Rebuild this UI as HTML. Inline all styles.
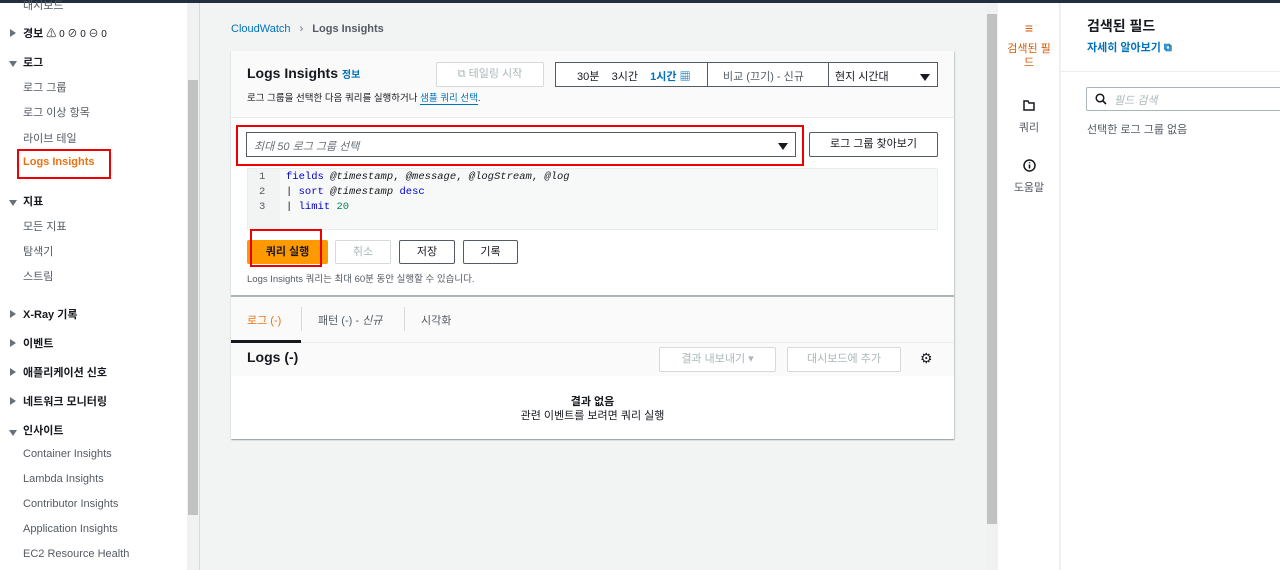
<!DOCTYPE html>
<html><head><meta charset="utf-8"><style>
*{box-sizing:border-box;margin:0;padding:0}
body{width:1280px;height:570px;overflow:hidden;background:#f2f3f3;font-family:"Liberation Sans","Noto Sans CJK KR",sans-serif;font-size:11px;color:#16191f;position:relative}
.a{position:absolute;white-space:nowrap}
.tri{display:inline-block;width:0;height:0}
.tr{border-top:4px solid transparent;border-bottom:4px solid transparent;border-left:6px solid #687078}
.td{border-left:4px solid transparent;border-right:4px solid transparent;border-top:6px solid #687078}
.btn{position:absolute;border:1px solid #545b64;border-radius:2px;background:#fff;text-align:center;font-weight:bold;font-size:11px}
.dis{border-color:#d5dbdb;color:#aab7b8;font-weight:normal}
.mono{font-family:"Liberation Mono",monospace;font-size:10.5px}
</style></head><body>
<div class="a" style="left:0;top:0;width:1280px;height:3px;background:#232f3e"></div>
<!-- sidebar -->
<div class="a" style="left:0;top:3px;width:187px;height:567px;background:#fff"></div>
<div class="a" style="left:187px;top:3px;width:12px;height:567px;background:#f1f1f1"></div>
<div class="a" style="left:188px;top:80px;width:10px;height:435px;background:#c1c1c1"></div>
<div class="a" style="left:199px;top:3px;width:1px;height:567px;background:#d5dbdb"></div>
<div class="a" style="left:23px;top:-3px;color:#545b64">대시보드</div>
<div class="a" style="left:10px;top:28px"><span class="tri tr"></span></div>
<div class="a" style="left:23px;top:25px;font-weight:bold">경보 <span style="font-weight:normal;font-size:10px">⚠ 0 ⊘ 0 ⊖ 0</span></div>
<div class="a" style="left:9px;top:58px"><span class="tri td"></span></div>
<div class="a" style="left:23px;top:54px;font-weight:bold">로그</div>
<div class="a" style="left:23px;top:79px;color:#545b64">로그 그룹</div>
<div class="a" style="left:23px;top:104px;color:#545b64">로그 이상 항목</div>
<div class="a" style="left:23px;top:130px;color:#545b64">라이브 테일</div>
<div class="a" style="left:17px;top:149px;width:94px;height:30px;border:2px solid #e00"></div>
<div class="a" style="left:23px;top:156px;color:#ec7211;font-weight:bold">Logs Insights</div>
<div class="a" style="left:9px;top:197px"><span class="tri td"></span></div>
<div class="a" style="left:23px;top:193px;font-weight:bold">지표</div>
<div class="a" style="left:23px;top:218px;color:#545b64">모든 지표</div>
<div class="a" style="left:23px;top:243px;color:#545b64">탐색기</div>
<div class="a" style="left:23px;top:268px;color:#545b64">스트림</div>
<div class="a" style="left:10px;top:309px"><span class="tri tr"></span></div>
<div class="a" style="left:23px;top:306px;font-weight:bold">X-Ray 기록</div>
<div class="a" style="left:10px;top:338px"><span class="tri tr"></span></div>
<div class="a" style="left:23px;top:335px;font-weight:bold">이벤트</div>
<div class="a" style="left:10px;top:367px"><span class="tri tr"></span></div>
<div class="a" style="left:23px;top:364px;font-weight:bold">애플리케이션 신호</div>
<div class="a" style="left:10px;top:396px"><span class="tri tr"></span></div>
<div class="a" style="left:23px;top:393px;font-weight:bold">네트워크 모니터링</div>
<div class="a" style="left:9px;top:427px"><span class="tri td"></span></div>
<div class="a" style="left:23px;top:422px;font-weight:bold">인사이트</div>
<div class="a" style="left:23px;top:448px;color:#545b64">Container Insights</div>
<div class="a" style="left:23px;top:473px;color:#545b64">Lambda Insights</div>
<div class="a" style="left:23px;top:498px;color:#545b64">Contributor Insights</div>
<div class="a" style="left:23px;top:523px;color:#545b64">Application Insights</div>
<div class="a" style="left:23px;top:548px;color:#545b64">EC2 Resource Health</div>
<!-- breadcrumb -->
<div class="a" style="left:231px;top:23px;color:#0073bb">CloudWatch <span style="color:#687078;margin:0 6px">›</span> <span style="color:#545b64;font-weight:bold">Logs Insights</span></div>
<!-- panel -->
<div class="a" style="left:231px;top:51px;width:723px;height:388px;background:#fff;box-shadow:0 1px 1px rgba(0,28,36,.3),1px 1px 1px rgba(0,28,36,.15)"></div>
<div class="a" style="left:231px;top:51px;width:723px;height:67px;background:#fafafa;border-bottom:1px solid #eaeded"></div>
<div class="a" style="left:247px;top:65px;font-size:14px;font-weight:bold">Logs Insights <span style="font-size:10px;color:#0073bb">정보</span></div>
<div class="a" style="left:247px;top:90px;font-size:9.5px">로그 그룹을 선택한 다음 쿼리를 실행하거나 <span style="color:#0073bb;border-bottom:1px solid #0073bb">샘플 쿼리 선택</span>.</div>
<div class="btn dis" style="left:436px;top:62px;width:108px;height:25px;line-height:23px">⧉ 테일링 시작</div>
<div class="a" style="left:555px;top:62px;width:383px;height:25px;border:1px solid #545b64;background:#fff"></div>
<div class="a" style="left:707px;top:62px;width:1px;height:25px;background:#545b64"></div>
<div class="a" style="left:828px;top:62px;width:1px;height:25px;background:#545b64"></div>
<div class="a" style="left:577px;top:68px;font-size:11px">30분 &nbsp;&nbsp;&nbsp;3시간 &nbsp;&nbsp;&nbsp;<span style="color:#0073bb;font-weight:bold">1시간 ▦</span></div>
<div class="a" style="left:723px;top:68px;color:#545b64">비교 (끄기) - 신규</div>
<div class="a" style="left:835px;top:68px">현지 시간대</div>
<div class="a" style="left:920px;top:72px"><span class="tri td" style="border-top-color:#16191f;border-left-width:5px;border-right-width:5px;border-top-width:7px"></span></div>
<!-- log group select -->
<div class="a" style="left:236px;top:125px;width:568px;height:41px;border:2px solid #e00"></div>
<div class="a" style="left:246px;top:132px;width:550px;height:25px;border:1px solid #545b64;background:#fff"></div>
<div class="a" style="left:254px;top:138px;color:#687078;font-style:italic">최대 50 로그 그룹 선택</div>
<div class="a" style="left:778px;top:141px"><span class="tri td" style="border-top-color:#16191f;border-left-width:5px;border-right-width:5px;border-top-width:7px"></span></div>
<div class="btn" style="left:809px;top:132px;width:129px;height:25px;line-height:23px;font-weight:normal">로그 그룹 찾아보기</div>
<!-- editor -->
<div class="a" style="left:247px;top:168px;width:691px;height:62px;background:#f7f8f8;border:1px solid #eaeded"></div>
<div class="a" style="left:248px;top:169px;width:32px;height:60px;background:#f2f3f3"></div>
<div class="a mono" style="left:259px;top:170px;line-height:15px;color:#545b64">1<br>2<br>3</div>
<div class="a mono" style="left:286px;top:170px;line-height:15px;color:#16191f"><span style="color:#0000cc">fields</span> <i>@timestamp</i>, <i>@message</i>, <i>@logStream</i>, <i>@log</i><br>| <span style="color:#0000cc">sort</span> <i>@timestamp</i> <span style="color:#0000cc">desc</span><br>| <span style="color:#0000cc">limit</span> <span style="color:#098658">20</span></div>
<!-- buttons -->
<div class="btn" style="left:247px;top:240px;width:81px;height:24px;line-height:22px;background:#ff9900;border-color:#ff9900">쿼리 실행</div>
<div class="a" style="left:250px;top:229px;width:72px;height:38px;border:2px solid #e00"></div>
<div class="btn dis" style="left:335px;top:240px;width:56px;height:24px;line-height:22px">취소</div>
<div class="btn" style="left:399px;top:240px;width:56px;height:24px;line-height:22px;font-weight:normal">저장</div>
<div class="btn" style="left:463px;top:240px;width:55px;height:24px;line-height:22px;font-weight:normal">기록</div>
<div class="a" style="left:247px;top:271px;font-size:9.5px;color:#545b64">Logs Insights 쿼리는 최대 60분 동안 실행할 수 있습니다.</div>
<!-- tabs -->
<div class="a" style="left:231px;top:295px;width:723px;height:2px;background:#aab7b8"></div>
<div class="a" style="left:231px;top:297px;width:723px;height:79px;background:#fafafa"></div>
<div class="a" style="left:231px;top:342px;width:723px;height:1px;background:#eaeded"></div>
<div class="a" style="left:247px;top:312px;color:#ec7211">로그 (-)</div>
<div class="a" style="left:231px;top:340px;width:70px;height:3px;background:#16191f"></div>
<div class="a" style="left:301px;top:307px;width:1px;height:24px;background:#d5dbdb"></div>
<div class="a" style="left:318px;top:312px;color:#545b64">패턴 (-) - <i>신규</i></div>
<div class="a" style="left:404px;top:307px;width:1px;height:24px;background:#d5dbdb"></div>
<div class="a" style="left:421px;top:312px;color:#545b64">시각화</div>
<div class="a" style="left:247px;top:349px;font-size:14px;font-weight:bold">Logs (-)</div>
<div class="btn dis" style="left:659px;top:347px;width:117px;height:25px;line-height:23px">결과 내보내기 ▾</div>
<div class="btn dis" style="left:787px;top:347px;width:114px;height:25px;line-height:23px">대시보드에 추가</div>
<div class="a" style="left:920px;top:350px;font-size:14px">⚙</div>
<div class="a" style="left:231px;top:393px;width:723px;text-align:center;font-weight:bold">결과 없음</div>
<div class="a" style="left:231px;top:407px;width:723px;text-align:center">관련 이벤트를 보려면 쿼리 실행</div>
<!-- main scrollbar -->
<div class="a" style="left:986px;top:3px;width:12px;height:567px;background:#f1f1f1"></div>
<div class="a" style="left:987px;top:14px;width:10px;height:510px;background:#c1c1c1"></div>
<!-- right rail -->
<div class="a" style="left:998px;top:3px;width:62px;height:567px;background:#fff;border-right:1px solid #eaeded"></div>
<div class="a" style="left:998px;top:20px;width:62px;text-align:center;color:#d45b07;font-size:14px">≡</div>
<div class="a" style="left:998px;top:42px;width:62px;text-align:center;color:#d45b07;white-space:normal;line-height:14px">검색된 필<br>드</div>
<svg class="a" style="left:1023px;top:100px" width="12" height="11" viewBox="0 0 12 11"><path d="M1 1h4l1 2h5v7H1z" fill="none" stroke="#16191f" stroke-width="1.5"/></svg>
<div class="a" style="left:998px;top:119px;width:62px;text-align:center;color:#545b64">쿼리</div>
<svg class="a" style="left:1023px;top:159px" width="13" height="13" viewBox="0 0 13 13"><circle cx="6.5" cy="6.5" r="5.5" fill="none" stroke="#16191f" stroke-width="1.5"/><path d="M6.5 5.5v4M6.5 3.2v1" stroke="#16191f" stroke-width="1.6"/></svg>
<div class="a" style="left:998px;top:179px;width:62px;text-align:center;color:#545b64">도움말</div>
<div class="a" style="left:1061px;top:3px;width:219px;height:567px;background:#fff"></div>
<div class="a" style="left:1061px;top:71px;width:219px;height:1px;background:#eaeded"></div>
<div class="a" style="left:1087px;top:16px;font-size:14px;font-weight:bold">검색된 필드</div>
<div class="a" style="left:1087px;top:39px;color:#0073bb;font-weight:bold">자세히 알아보기 ⧉</div>
<div class="a" style="left:1086px;top:87px;width:200px;height:24px;border:1px solid #aab7b8;border-radius:2px"></div>
<svg class="a" style="left:1095px;top:93px" width="12" height="12" viewBox="0 0 12 12"><circle cx="5" cy="5" r="3.8" fill="none" stroke="#16191f" stroke-width="1.5"/><path d="M8 8l3 3" stroke="#16191f" stroke-width="1.6"/></svg>
<div class="a" style="left:1114px;top:92px;color:#aab7b8;font-style:italic">필드 검색</div>
<div class="a" style="left:1087px;top:121px;color:#545b64">선택한 로그 그룹 없음</div>
</body></html>
